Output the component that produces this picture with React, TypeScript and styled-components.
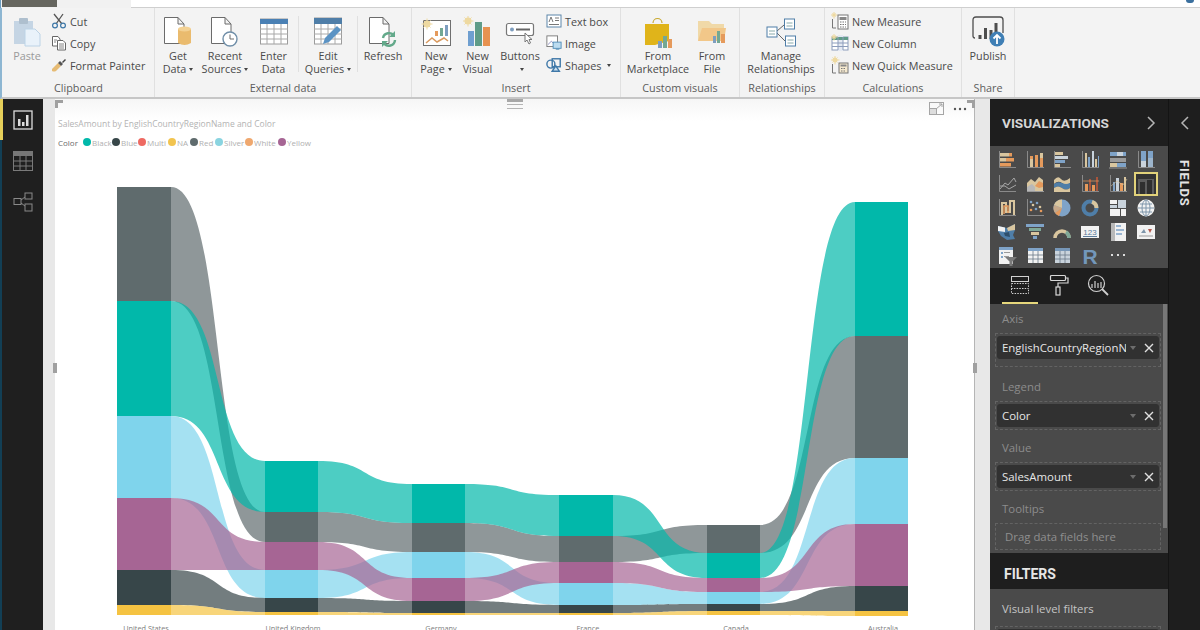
import React from "react";
import styled, { createGlobalStyle } from "styled-components";

const UI = `"Open Sans", "Liberation Sans", sans-serif`;

const Global = createGlobalStyle`
  html, body { margin: 0; padding: 0; width: 1200px; height: 630px; overflow: hidden; background: #f3f3f3; }
  * { box-sizing: border-box; }
  #root { width: 1200px; height: 630px; }
`;

const Frame = styled.div`
  width: 1200px; height: 630px; display: flex; flex-direction: column; overflow: hidden;
  font-family: ${UI};
`;
const TitleStrip = styled.div`
  height: 8px; display: flex; background: #f1f1f1; border-left: 1px solid #6a9cc0;
`;
const GreyTab = styled.div`
  width: 55px; height: 7px; margin-left: 1px; background: #66665f;
`;
const SearchBox = styled.div`
  flex: 1; margin-left: 74px; height: 8px; background: #fff; border-bottom: 1px solid #cfcfcf;
  display: flex; justify-content: flex-end; padding-right: 6px;
`;
const UserDot = styled.span`
  width: 8px; height: 3px; border-radius: 0 0 4px 4px; background: #3a6f9e;
`;
const Ribbon = styled.div`
  height: 91px; display: flex; padding-left: 1px; background: #f3f3f3;
  border-left: 2px solid #8db6d2; border-bottom: 2px solid #c6c6c6;
`;
const Group = styled.div<{ $w: number; $pl?: number }>`
  width: ${p => p.$w}px; padding-left: ${p => p.$pl || 0}px; display: flex; flex-direction: column;
  border-right: 1px solid #e0e0e0;
`;
const GroupBody = styled.div`
  height: 73px; display: flex;
`;
const GroupLabel = styled.div<{ $shift?: number }>`
  height: 14px; line-height: 14px; text-align: center; font-size: 10.8px; color: #5c5c5c;
  margin-left: ${p => p.$shift || 0}px;
`;
const BigButton = styled.div<{ $w: number; $muted?: boolean }>`
  width: ${p => p.$w}px; padding-top: 6px; display: flex; flex-direction: column; align-items: center;
  font-size: 10.8px; line-height: 13px; color: ${p => (p.$muted ? "#9a9a9a" : "#4a4a4a")};
  text-align: center; white-space: nowrap;
`;
const BigLabel = styled.div`
  margin-top: -1px;
`;
const IconSlot = styled.div`
  height: 36px; display: flex; align-items: center; justify-content: center;
`;
const Caret = styled.span`
  display: inline-block; width: 0; height: 0; margin-left: 3px; vertical-align: 2px;
  border-left: 2.5px solid transparent; border-right: 2.5px solid transparent; border-top: 3px solid #444;
`;
const Sep = styled.div`
  width: 1px; height: 56px; margin-top: 8px; background: #e0e0e0;
`;
const SmallCol = styled.div<{ $ml?: number }>`
  padding-top: 2px; margin-left: ${p => p.$ml || 0}px; display: flex; flex-direction: column;
`;
const SmallRow = styled.div`
  height: 22px; display: flex; align-items: center; gap: 3px; font-size: 10.8px; color: #4a4a4a; white-space: nowrap;
`;
const Main = styled.div`
  flex: 1; min-height: 0; display: flex;
`;
const LeftNav = styled.nav`
  width: 43px; background: #1f1f1f; display: flex; flex-direction: column; border-left: 2px solid #123f55;
`;
const NavItem = styled.div<{ $active?: boolean }>`
  height: 41px; margin-left: -2px; display: flex; align-items: center; justify-content: center;
  border-left: 3px solid ${p => (p.$active ? "#e6cf5a" : "transparent")};
`;
const CanvasArea = styled.div`
  flex: 1; min-width: 0; background: #e8e8e8; padding: 0 15px 0 12px;
`;
const Page = styled.div`
  position: relative; height: 100%; background: linear-gradient(#f6f6f6, #fff 22px);
  border-right: 1px solid #b5b5b5;
`;
const VisualHeader = styled.div`
  padding: 19px 0 2px 3px; display: flex; flex-direction: column; gap: 6px;
`;
const VisualTitle = styled.div`
  height: 12px; line-height: 12px; font-size: 8.5px; color: #b3b3b3; white-space: nowrap;
`;
const Legend = styled.div`
  height: 12px; display: flex; align-items: center; font-size: 8px; color: #b0b0b0; white-space: nowrap;
`;
const LegendName = styled.span`
  width: 25px; color: #6a6a6a;
`;
const LegendItem = styled.span<{ $w: number }>`
  width: ${p => p.$w}px; display: flex; align-items: center; gap: 1px;
`;
const Dot = styled.i<{ $c: string }>`
  width: 8px; height: 8px; border-radius: 50%; background: ${p => p.$c};
`;
const ChartSvg = styled.svg`
  display: block;
`;
const DragLines = styled.div`
  position: absolute; left: 452px; top: 0; width: 16px; height: 10px;
  border-top: 3px solid #a8a8a8; border-bottom: 1px solid #b5b5b5;
  &::after { content: ""; display: block; height: 1px; margin-top: 2px; background: #b5b5b5; }
`;
const Corner = styled.div<{ $right?: boolean }>`
  position: absolute; top: 1px; width: 8px; height: 8px; border-top: 3px solid #a0a0a0;
  ${p => (p.$right ? "right: -1px; border-right: 3px solid #a0a0a0;" : "left: 0; border-left: 3px solid #a0a0a0;")}
`;
const VisualTools = styled.div`
  position: absolute; top: 3px; right: 7px; display: flex; align-items: center; gap: 9px;
`;
const Handle = styled.div<{ $right?: boolean }>`
  position: absolute; top: 264px; width: 4px; height: 10px; background: #a0a0a0;
  ${p => (p.$right ? "right: -3px;" : "left: -2px;")}
`;
const VizPanel = styled.aside`
  width: 178px; background: #1e1e1e; display: flex; flex-direction: column;
`;
const PanelHeader = styled.div`
  height: 47px; padding: 0 12px; display: flex; align-items: center; justify-content: space-between;
`;
const PanelTitle = styled.div`
  font-family: Roboto, sans-serif; font-weight: 700; font-size: 13.6px; color: #d6d6d6;
`;
const Gallery = styled.div`
  height: 122px; padding: 2px 0 0 3px; background: #4a4a4a;
  display: grid; grid-template-columns: repeat(6, 27.8px); grid-auto-rows: 24px;
`;
const GalleryCell = styled.div<{ $selected?: boolean }>`
  display: flex; align-items: center; justify-content: center;
  ${p => p.$selected && "margin: 0 2px; border: 2px solid #e2d27a; background: #333;"}
`;
const TabRow = styled.div`
  height: 36px; display: flex; gap: 3px; padding-left: 12px;
`;
const Tab = styled.div<{ $active?: boolean }>`
  width: 36px; display: flex; align-items: center; justify-content: center;
  border-bottom: 2px solid ${p => (p.$active ? "#e6d77c" : "transparent")};
`;
const Wells = styled.div`
  position: relative; height: 249px; background: #4a4a4a; overflow: hidden;
`;
const Scrollbar = styled.div`
  position: absolute; right: 1px; top: 0; width: 4px; height: 224px; background: #777;
`;
const WellLabel = styled.div<{ $top: number }>`
  margin-top: ${p => p.$top}px; height: 26px; line-height: 26px; padding-left: 12px; font-size: 11.4px; color: #8c8c8c;
`;
const Well = styled.div<{ $pad: number; $empty?: boolean }>`
  margin: 1px 7px 0 5px; padding: ${p => (p.$empty ? "0 0 0 9px" : `2px 1px ${p.$pad}px`)};
  ${p => p.$empty && "height: 27px; line-height: 26px; font-size: 11.4px; color: #8f8f8f;"}
  border: 1px dashed #636363; white-space: nowrap;
`;
const Chip = styled.div`
  height: 23px; padding: 0 5px 0 5px; display: flex; align-items: center; border-radius: 3px;
  background: #313131; color: #e6e6e6; font-size: 11.4px;
`;
const ChipName = styled.span`
  flex: 1; overflow: hidden; white-space: nowrap;
`;
const ChipCaret = styled.span`
  width: 0; height: 0; margin: 0 8px 0 4px;
  border-left: 3.5px solid transparent; border-right: 3.5px solid transparent; border-top: 4px solid #6d6d6d;
`;
const FiltersHeader = styled.div`
  height: 36px; padding: 6px 0 0 14px; display: flex; align-items: center;
  font-family: Roboto, sans-serif; font-weight: 700; font-size: 14px; color: #e6e6e6;
`;
const FilterBody = styled.div`
  flex: 1; background: #4a4a4a; overflow: hidden;
`;
const FilterLabel = styled.div`
  height: 36px; line-height: 39px; padding-left: 12px; font-size: 11.4px; color: #c4c4c4;
`;
const FieldsPanel = styled.aside`
  width: 32px; background: #1e1e1e; border-left: 1px solid #141414; display: flex; flex-direction: column; align-items: center;
`;
const FieldsChevron = styled.div`
  height: 47px; display: flex; align-items: center;
`;
const FieldsTitle = styled.div`
  margin-top: 14px; writing-mode: vertical-rl; font-family: Roboto, sans-serif; font-weight: 700; font-size: 13px;
  letter-spacing: 0.8px; color: #e4e4e4;
`;

/* ---------- ribbon icons ---------- */
const Doc = ({ s = "#6b6b6b" }: { s?: string }) => (
  <path d="M1.5 1.5H15L21 8V27.5H1.5Z M15 1.5V8H21" fill="#fff" stroke={s} strokeWidth="1" />
);
const Paste = () => (
  <svg width="28" height="30" viewBox="0 0 28 30"><rect x="1" y="4" width="19" height="23" fill="#c5d5e4" /><rect x="6" y="1" width="9" height="6" rx="1" fill="#aebfce" /><path d="M12 12H22L27 17V29H12Z" fill="#e9f2fa" stroke="#bcd3e6" /></svg>
);
const Cut = () => (
  <svg width="16" height="16" viewBox="0 0 16 16" fill="none"><path d="M3 1L11 11M12 1L5 11" stroke="#555" strokeWidth="1.3" /><circle cx="4" cy="12.5" r="2.4" stroke="#3f78a8" strokeWidth="1.2" /><circle cx="12" cy="12.5" r="2.4" stroke="#3f78a8" strokeWidth="1.2" /></svg>
);
const Copy = () => (
  <svg width="16" height="16" viewBox="0 0 16 16" fill="#fff" stroke="#666"><path d="M1.5 1.5H7L9 4V11H1.5Z" /><path d="M6.5 5.5H12L14.5 8V15H6.5Z" /><path d="M8 9H13M8 11H13M8 13H13M3 5H6M3 7H5" strokeWidth=".8" /></svg>
);
const Painter = () => (
  <svg width="16" height="16" viewBox="0 0 16 16"><path d="M1 12L7 6L10 9L5 14Q3 15 1 14Z" fill="#e6bb74" /><path d="M7 6L9 4L12 7L10 9Z" fill="#555" /><path d="M11 5L14 2L15 3L12 6Z" fill="#444" /></svg>
);
const GetData = () => (
  <svg width="30" height="32" viewBox="0 0 30 32"><Doc /><path d="M15 13H28V27Q21.500 31 15 27Z" fill="#eabb6e" /><ellipse cx="21.500" cy="13" rx="6.500" ry="2.500" fill="#f3d193" /></svg>
);
const Recent = () => (
  <svg width="30" height="32" viewBox="0 0 30 32"><Doc /><circle cx="20" cy="23" r="7" fill="#fff" stroke="#6f8ea8" strokeWidth="1.4" /><path d="M20 18.500V23H24" fill="none" stroke="#6b6b6b" /></svg>
);
const EnterData = () => (
  <svg width="30" height="28" viewBox="0 0 30 28"><rect x="1.500" y="1" width="27" height="25" fill="#fff" stroke="#9c9c9c" /><rect x="1" y="1" width="28" height="5" fill="#4a80b4" /><path d="M1 11H29M1 16H29M1 21H29M8 6V26M15 6V26M22 6V26" stroke="#a8a8a8" fill="none" /></svg>
);
const EditQueries = () => (
  <svg width="30" height="30" viewBox="0 0 30 30"><rect x="1.500" y="1" width="27" height="26" fill="#fff" stroke="#9c9c9c" /><rect x="1" y="1" width="28" height="6" fill="#4f7ea8" /><path d="M1 12H29M1 17H29M1 22H29M8 7V27M15 7V27M22 7V27" stroke="#aaa" fill="none" /><path d="M10 27L12 21L24 9L28 13L16 25Z" fill="#5b93c4" /></svg>
);
const Refresh = () => (
  <svg width="30" height="32" viewBox="0 0 30 32" fill="none"><Doc /><path d="M15 22A6 6 0 0 1 26 20M27 24A6 6 0 0 1 16 27" stroke="#63a98a" strokeWidth="2.400" /><path d="M27 15V21H21ZM14 31V25H20Z" fill="#63a98a" /></svg>
);
const Sun = ({ x = 6, y = 6, r = 3.5 }: { x?: number; y?: number; r?: number }) => (
  <g><circle cx={x} cy={y} r={r} fill="#eed9a0" /><path d={`M${x - r - 2} ${y}H${x + r + 2}M${x} ${y - r - 2}V${y + r + 2}M${x - r} ${y - r}L${x + r} ${y + r}M${x + r} ${y - r}L${x - r} ${y + r}`} stroke="#eed9a0" /></g>
);
const NewPage = () => (
  <svg width="32" height="30" viewBox="0 0 32 30" fill="none"><rect x="3.500" y="3.500" width="27" height="25" fill="#fff" stroke="#6f6f6f" /><rect x="15" y="14" width="3" height="5" fill="#e59a5c" /><rect x="20" y="11" width="3" height="8" fill="#73a894" /><rect x="25" y="8" width="3" height="11" fill="#7e9ebf" /><path d="M6 26L12 21L17 25L24 21L28 24" stroke="#d99a60" strokeWidth="1.500" /><Sun x={7} y={7} /></svg>
);
const NewVisual = () => (
  <svg width="30" height="32" viewBox="0 0 30 32"><rect x="5" y="15" width="6" height="15" fill="#6f9fd0" /><rect x="12" y="6" width="7" height="24" fill="#5f9c88" /><rect x="20" y="11" width="7" height="19" fill="#e79250" /><Sun x={5} y={5} /></svg>
);
const Buttons = () => (
  <svg width="30" height="30" viewBox="0 0 30 30" fill="none"><rect x="1.500" y="6.500" width="27" height="12" rx="2" fill="#fff" stroke="#777" strokeWidth="1.200" /><circle cx="7" cy="12.500" r="2" fill="#7e9ebf" /><path d="M11 12.500H25" stroke="#666" strokeWidth="2" /><path d="M20 16V25L22 23L24 27L25.500 26L24 22.500H27Z" fill="#fff" stroke="#777" /></svg>
);
const TextBox = () => (
  <svg width="16" height="16" viewBox="0 0 16 16" fill="none"><rect x="1" y="2" width="14" height="12" stroke="#5c86aa" fill="#fff" /><path d="M3 9L5 4L7 9M9 5H13M9 7.500H13M3 11.500H13" stroke="#777" /></svg>
);
const ImageIcon = () => (
  <svg width="16" height="18" viewBox="0 0 18 18" fill="none"><rect x="1" y="1" width="12" height="12" fill="#fff" stroke="#777" /><path d="M2 11L6 7L10 11" stroke="#88b" /><rect x="8" y="8" width="9" height="7" fill="#bcdcf0" stroke="#4f8cb8" /><path d="M11 16H15" stroke="#4f8cb8" /></svg>
);
const Shapes = () => (
  <svg width="16" height="18" viewBox="0 0 18 18" fill="none" stroke="#3f78a8" strokeWidth="1.600"><circle cx="5.500" cy="8" r="4.500" /><rect x="7" y="2" width="9" height="9" /><path d="M7 16L11 10L15 16Z" fill="#cfe2f0" /></svg>
);
const Market = () => (
  <svg width="30" height="33" viewBox="0 0 30 33" fill="none"><path d="M10 7A4.500 4.500 0 0 1 19 7" stroke="#c9a92f" strokeWidth="1.200" /><path d="M2 8H26V25L12 29H2Z" fill="#e0b41a" /><rect x="15" y="25" width="4" height="7" fill="#7e9ebf" /><rect x="20" y="20" width="4" height="12" fill="#73a894" /><rect x="25" y="23" width="4" height="9" fill="#e59a5c" /></svg>
);
const FromFile = () => (
  <svg width="30" height="30" viewBox="0 0 30 30"><path d="M1 4H12L15 7H27V24H1Z" fill="#f0d9a8" /><path d="M1 24L5 11H29L27 24Z" fill="#f2c789" /><rect x="16" y="19" width="3" height="7" fill="#7e9ebf" /><rect x="20" y="14" width="3" height="12" fill="#73a894" /><rect x="24" y="17" width="4" height="9" fill="#e59a5c" /></svg>
);
const Relationships = () => (
  <svg width="30" height="30" viewBox="0 0 30 30" fill="#fff" stroke="#4f7ea8"><path d="M11 14L18 8M11 16L19 24" fill="none" stroke="#666" /><rect x="1" y="10" width="10" height="10" /><rect x="18.500" y="2" width="10" height="10" /><rect x="19.500" y="19" width="10" height="10" /><path d="M3 14H9M3 17H9M20.500 6H26.500M20.500 9H26.500M21.500 23H27.500M21.500 26H27.500" stroke="#8aa" /></svg>
);
const Measure = () => (
  <svg width="18" height="18" viewBox="0 0 18 18"><Sun x={3} y={3} r={1.600} /><path d="M1.500 7V16H5" fill="none" stroke="#777" /><rect x="7" y="3" width="10" height="14" fill="#fff" stroke="#777" /><rect x="8.500" y="5" width="7" height="3" fill="#888" /><path d="M9 10H15M9 12.500H15M9 15H15" stroke="#777" strokeDasharray="1.500 1" /></svg>
);
const Column = () => (
  <svg width="18" height="18" viewBox="0 0 18 18" fill="none"><rect x="1" y="3" width="16" height="13" fill="#fff" stroke="#8d9dbc" /><rect x="7" y="1" width="5" height="16" fill="#e4e9f2" /><rect x="1" y="3" width="16" height="3" fill="#5f9c88" /><path d="M1 9H17M1 12.500H17M7 3V16M12 3V16" stroke="#8d9dbc" /><Sun x={3} y={3} r={1.600} /></svg>
);
const QuickMeasure = () => (
  <svg width="18" height="18" viewBox="0 0 18 18"><Sun x={4} y={4} r={2.500} /><path d="M1.500 8V17H5" fill="none" stroke="#777" /><rect x="8" y="7" width="9" height="10" fill="#f5e9cf" stroke="#777" /><rect x="9.500" y="8.500" width="6" height="2" fill="#888" /><path d="M10 12.500H15M10 15H15" stroke="#777" strokeDasharray="1.500 1" /></svg>
);
const Publish = () => (
  <svg width="34" height="34" viewBox="0 0 34 34" fill="none"><path d="M4 23Q2 23 2 21V5Q2 2 5 2H29Q32 2 32 5V18" stroke="#4e4e4e" strokeWidth="1.300" /><path d="M9 24V20M14.500 24V13M20 24V15M25 20V8" stroke="#4e4e4e" strokeWidth="3" /><circle cx="26" cy="24" r="7.500" fill="#3f7fb5" /><path d="M26 29V20M22.500 23.500L26 20L29.500 23.500" stroke="#fff" strokeWidth="1.800" /></svg>
);

/* ---------- nav ---------- */
const NavReport = () => (
  <svg width="20" height="20" viewBox="0 0 20 20" fill="none"><rect x="1" y="1" width="18" height="18" stroke="#ddd" strokeWidth="1.300" /><path d="M5 16V9H7.500V16ZM9 16V12H11.500V16ZM13 16V5H15.500V16Z" fill="#ddd" /></svg>
);
const NavData = () => (
  <svg width="20" height="20" viewBox="0 0 20 20" fill="none"><rect x=".5" y=".5" width="19" height="19" stroke="#7a7a7a" /><rect x="0" y="0" width="20" height="5" fill="#777" /><path d="M0 10H20M0 15H20M7 5V20M13 5V20" stroke="#7a7a7a" /></svg>
);
const NavModel = () => (
  <svg width="20" height="20" viewBox="0 0 20 20" fill="none" stroke="#8a8a8a"><rect x="1" y="6.500" width="7" height="6" /><rect x="12" y="1" width="7" height="6" /><rect x="12" y="12" width="7" height="7" /><path d="M8 8L12 5M8 11L12 14" /></svg>
);

/* ---------- gallery ---------- */
const o = "#e59a5c", b = "#7fa3c8", t = "#d9c69f", w = "#f2f2f2", g = "#7fa898", a = "#9a9a9a", l = "#c9d3dc";
const rs = (...items: [number, number, number, number, string][]) =>
  items.map(([x, y, wd, h, c], i) => <rect key={i} x={x} y={y} width={wd} height={h} fill={c} />);
const Axes = () => <path d="M2.500 1V17.500H19" fill="none" stroke={a} strokeWidth=".8" />;
const Grid3 = ({ hc = b, bg = w }: { hc?: string; bg?: string }) => (
  <g><rect x="3" y="2" width="15" height="15" fill={bg} /><rect x="3" y="2" width="15" height="3" fill={hc} /><path d="M3 9H18M3 13H18M8 5V17M13 5V17" stroke="#6b7a88" strokeWidth=".8" /></g>
);
const galleryIcons: React.ReactNode[] = [
  <><Axes />{rs([3, 3, 9, 3.500, t], [12, 3, 3, 3.500, o], [3, 8, 6, 3.500, t], [9, 8, 8, 3.500, o], [3, 13, 11, 3.500, o])}</>,
  <><Axes />{rs([5, 9, 3, 8, t], [5, 6, 3, 3, o], [10, 5, 3, 12, o], [15, 3, 3, 14, t], [15, 8, 3, 9, o])}</>,
  <><Axes />{rs([3, 2, 8, 3, t], [3, 6, 13, 3, l], [3, 10, 10, 3, b], [3, 14, 5, 3, t])}</>,
  <><Axes />{rs([5, 3, 2, 14, t], [8, 7, 2, 10, b], [12, 1, 2, 16, l], [15, 9, 2, 8, t], [18, 6, 1, 11, b])}</>,
  <>{rs([2, 2, 16, 4, b], [9, 2, 6, 4, l], [2, 8, 16, 4, a], [2, 13, 16, 4, b], [2, 13, 7, 4, t])}<path d="M1 18H19" stroke={a} /></>,
  <><Axes />{rs([5, 1, 5, 10, b], [5, 11, 5, 6, l], [12, 1, 5, 7, b], [12, 8, 5, 9, "#9db5cc"])}</>,
  <><Axes /><path d="M3 15L8 9L11 11L17 4L19 8M3 12L8 12L12 15L19 11" fill="none" stroke="#b0b0b0" strokeWidth=".9" /></>,
  <><path d="M2 9L6 5L10 8L14 3L18 6V17H2Z" fill={t} /><path d="M10 12L14 7L18 9V13L14 14Z" fill={o} /><path d="M2 13L7 10L10 13V17H2Z" fill="#b8b8b8" /><path d="M2 17.500H19" stroke={a} /></>,
  <><path d="M2 6Q6 1 9 5T18 4V9Q14 12 10 9T2 10Z" fill={t} /><path d="M2 10Q6 7 10 9T18 9V14Q14 17 10 14T2 14Z" fill="#4f7ea8" /><path d="M2 14Q6 11 10 14T18 14V18H2Z" fill={t} /></>,
  <><Axes />{rs([5, 10, 3, 7, o], [9, 5, 2, 12, "#a8553c"], [12, 11, 3, 6, o], [16, 3, 2, 14, "#a8553c"])}<path d="M3 7H19" stroke={o} strokeWidth=".7" /></>,
  <><Axes />{rs([5, 8, 2, 9, b], [8, 4, 3, 13, l], [12, 9, 3, 8, o], [16, 3, 2, 14, t])}<path d="M3 12L9 7L15 11L19 5" stroke={t} strokeWidth=".6" fill="none" /></>,
  null,
  <><Axes /><path d="M5 17V5H9V14H13V3H17V17" fill="none" stroke={t} strokeWidth="2" /><path d="M7 16V8H11V15" fill="none" stroke={o} strokeWidth="1.500" /></>,
  <><Axes />{[[6, 12, o], [8, 7, t], [12, 5, b], [11, 11, b], [15, 9, t], [16, 13, o], [6, 4, b]].map(([x, y, c], i) => <circle key={i} cx={x as number} cy={y as number} r="1.300" fill={c as string} />)}</>,
  <><circle cx="10" cy="10" r="8.500" fill={b} /><path d="M10 10L10 1.500A8.500 8.500 0 0 0 2 7Z" fill={t} /><path d="M10 10L2 7A8.500 8.500 0 0 0 3 15Z" fill="#c7a98a" /><path d="M10 10L3 15A8.500 8.500 0 0 0 7 18Z" fill={o} /></>,
  <><circle cx="10" cy="10" r="6.500" fill="none" stroke="#4f7ea8" strokeWidth="4" /><path d="M12 3.800A6.500 6.500 0 0 1 16.500 10" fill="none" stroke={t} strokeWidth="4" /></>,
  <>{rs([2, 2, 7, 4, w], [2, 7, 7, 3, l], [10, 2, 8, 8, l], [2, 11, 10, 7, w], [13, 11, 5, 7, w])}</>,
  <><circle cx="10" cy="10" r="8.500" fill={w} /><path d="M2 10H18M10 2V18M4 6H16M4 14H16" stroke="#7f96ab" /><ellipse cx="10" cy="10" rx="4" ry="8" fill="none" stroke="#7f96ab" /></>,
  <><path d="M1 4L10 6L18 2V8L16 13L18 17L10 18L4 14L1 9Z" fill="#4f7ea8" /><path d="M1 4L8 5.500V10L1 9Z" fill={w} /><path d="M10 6L18 2V8L11 9Z" fill={t} /><path d="M7 11L12 10L13 15L8 14Z" fill="#2f4f6b" /></>,
  <>{rs([1, 2, 18, 3, b], [4, 6, 12, 3, "#7fa898"], [6, 10, 8, 3, t], [8, 14, 4, 3, b])}</>,
  <><path d="M3 16A7 7 0 0 1 17 16" fill="none" stroke={t} strokeWidth="3.500" /><path d="M14 10A7 7 0 0 1 17 16" fill="none" stroke={g} strokeWidth="3.500" /></>,
  <><rect x="1" y="4" width="18" height="12" fill={w} /><text x="10" y="12.500" textAnchor="middle" fontFamily="Liberation Sans" fontSize="8" fill="#5c7d9c">123</text><path d="M3 14.500H17" stroke="#5c7d9c" /></>,
  <><rect x="3" y="1" width="15" height="18" fill={w} /><rect x="3" y="1" width="4" height="18" fill="#b9b9b9" /><path d="M8 4H13M8 8H16M8 12H14" stroke={b} strokeWidth="1.500" /></>,
  <><rect x="1" y="3" width="18" height="14" fill={w} /><path d="M5 11L8 7L10 11Z" fill="#7f96ab" /><path d="M12 7H16L14 11Z" fill="#b35a4c" /><path d="M3 14H17" stroke={a} /></>,
  <><rect x="2" y="1" width="14" height="17" fill={w} /><rect x="2" y="1" width="14" height="3" fill={b} />{rs([4, 6, 2, 2, b], [4, 10, 2, 2, b], [7, 6, 6, 1, a], [7, 10, 5, 1, a])}<path d="M8 11H20L15.500 15.500V20H12.500V15.500Z" fill="#7a7a7a" /></>,
  <Grid3 />,
  <Grid3 bg={l} hc="#7797b8" />,
  <text x="10" y="17.500" textAnchor="middle" fontFamily="Liberation Sans" fontWeight="700" fontSize="21" fill="#7397bb">R</text>,
  <path d="M3 9H5M9 9H11M15 9H17" stroke="#ddd" strokeWidth="2" />,
];

/* ---------- chart ---------- */
const COLS = [[117, 171], [265, 318], [412, 465], [559, 613], [707, 760], [855, 908]];
const SERIES = [
  { c: "#5f6b6d", top: [187, 512, 523, 536, 525, 336], bot: [301, 542, 552, 562, 553, 458] },
  { c: "#01b8aa", top: [301, 461, 484, 495, 553, 202], bot: [416, 512, 523, 536, 578, 336] },
  { c: "#7fd4ec", top: [416, 570, 552, 583, 592, 458], bot: [498, 598, 578, 605, 604, 524] },
  { c: "#a66594", top: [498, 542, 578, 562, 578, 524], bot: [570, 570, 601, 583, 592, 586] },
  { c: "#374649", top: [570, 598, 601, 605, 604, 586], bot: [605, 612, 613, 613, 611, 611] },
  { c: "#f5c342", top: [605, 612, 613, 613, 611, 611], bot: [615, 615, 615, 615, 615, 616] },
];
const ribbonPath = (i: number, top: number[], bot: number[]) => {
  const x1 = COLS[i][1], x2 = COLS[i + 1][0], w2 = x2 - x1;
  const c1 = x1 + w2 * 0.58, c2 = x1 + w2 * 0.42;
  return `M${x1} ${top[i]}C${c1} ${top[i]} ${c2} ${top[i + 1]} ${x2} ${top[i + 1]}V${bot[i + 1]}C${c2} ${bot[i + 1]} ${c1} ${bot[i]} ${x1} ${bot[i]}Z`;
};
const AXIS = [["United States", 146], ["United Kingdom", 293], ["Germany", 441], ["France", 588], ["Canada", 736], ["Australia", 883]] as const;

const LEGEND: [string, string, number][] = [
  ["Black", "#01b8aa", 29], ["Blue", "#374649", 26], ["Multi", "#ee6a62", 30], ["NA", "#f2c44f", 22],
  ["Red", "#5f6b6d", 25], ["Silver", "#8ad4e0", 30], ["White", "#efa86f", 33], ["Yellow", "#a66594", 34],
];

const X = () => (
  <svg width="10" height="10" viewBox="0 0 10 10"><path d="M1 1L9 9M9 1L1 9" stroke="#e0e0e0" strokeWidth="1.400" /></svg>
);
const Field = ({ name }: { name: string }) => (
  <Chip><ChipName>{name}</ChipName><ChipCaret /><X /></Chip>
);
const Chev = ({ left }: { left?: boolean }) => (
  <svg width="9" height="14" viewBox="0 0 9 14" fill="none"><path d={left ? "M8 1L2 7L8 13" : "M1 1L7 7L1 13"} stroke="#b5b5b5" strokeWidth="1.500" /></svg>
);

export default function App() {
  return (
    <Frame>
      <Global />
      <TitleStrip>
        <GreyTab />
        <SearchBox><UserDot /></SearchBox>
      </TitleStrip>
      <Ribbon>
        <Group $w={152}>
          <GroupBody>
            <BigButton $w={48} $muted><IconSlot><Paste /></IconSlot><BigLabel>Paste</BigLabel></BigButton>
            <SmallCol>
              <SmallRow><Cut />Cut</SmallRow>
              <SmallRow><Copy />Copy</SmallRow>
              <SmallRow><Painter />Format Painter</SmallRow>
            </SmallCol>
          </GroupBody>
          <GroupLabel>Clipboard</GroupLabel>
        </Group>
        <Group $w={257}>
          <GroupBody>
            <BigButton $w={46}><IconSlot><GetData /></IconSlot><BigLabel>Get<br />Data<Caret /></BigLabel></BigButton>
            <BigButton $w={48}><IconSlot><Recent /></IconSlot><BigLabel>Recent<br />Sources<Caret /></BigLabel></BigButton>
            <BigButton $w={49}><IconSlot><EnterData /></IconSlot><BigLabel>Enter<br />Data</BigLabel></BigButton>
            <Sep />
            <BigButton $w={58}><IconSlot><EditQueries /></IconSlot><BigLabel>Edit<br />Queries<Caret /></BigLabel></BigButton>
            <Sep />
            <BigButton $w={50}><IconSlot><Refresh /></IconSlot><BigLabel>Refresh</BigLabel></BigButton>
          </GroupBody>
          <GroupLabel>External data</GroupLabel>
        </Group>
        <Group $w={209} $pl={3}>
          <GroupBody>
            <BigButton $w={42}><IconSlot><NewPage /></IconSlot><BigLabel>New<br />Page<Caret /></BigLabel></BigButton>
            <BigButton $w={41}><IconSlot><NewVisual /></IconSlot><BigLabel>New<br />Visual</BigLabel></BigButton>
            <BigButton $w={44}><IconSlot><Buttons /></IconSlot><BigLabel>Buttons<br /><Caret /></BigLabel></BigButton>
            <SmallCol $ml={4}>
              <SmallRow><TextBox />Text box</SmallRow>
              <SmallRow><ImageIcon />Image</SmallRow>
              <SmallRow><Shapes />Shapes<Caret /></SmallRow>
            </SmallCol>
          </GroupBody>
          <GroupLabel $shift={-3}>Insert</GroupLabel>
        </Group>
        <Group $w={119} $pl={4}>
          <GroupBody>
            <BigButton $w={66}><IconSlot><Market /></IconSlot><BigLabel>From<br />Marketplace</BigLabel></BigButton>
            <BigButton $w={42}><IconSlot><FromFile /></IconSlot><BigLabel>From<br />File</BigLabel></BigButton>
          </GroupBody>
          <GroupLabel $shift={-4}>Custom visuals</GroupLabel>
        </Group>
        <Group $w={85}>
          <GroupBody>
            <BigButton $w={82}><IconSlot><Relationships /></IconSlot><BigLabel>Manage<br />Relationships</BigLabel></BigButton>
          </GroupBody>
          <GroupLabel>Relationships</GroupLabel>
        </Group>
        <Group $w={137} $pl={6}>
          <GroupBody>
            <SmallCol>
              <SmallRow><Measure />New Measure</SmallRow>
              <SmallRow><Column />New Column</SmallRow>
              <SmallRow><QuickMeasure />New Quick Measure</SmallRow>
            </SmallCol>
          </GroupBody>
          <GroupLabel $shift={-6}>Calculations</GroupLabel>
        </Group>
        <Group $w={53}>
          <GroupBody>
            <BigButton $w={52}><IconSlot><Publish /></IconSlot><BigLabel>Publish</BigLabel></BigButton>
          </GroupBody>
          <GroupLabel>Share</GroupLabel>
        </Group>
      </Ribbon>
      <Main>
        <LeftNav>
          <NavItem $active><NavReport /></NavItem>
          <NavItem><NavData /></NavItem>
          <NavItem><NavModel /></NavItem>
        </LeftNav>
        <CanvasArea>
          <Page>
            <Corner />
            <Corner $right />
            <DragLines />
            <VisualTools>
              <svg width="15" height="13" viewBox="0 0 15 13" fill="none" stroke="#a5a5a5"><rect x=".5" y=".5" width="14" height="12" /><rect x=".5" y="6.500" width="7" height="6" fill="#ddd" /><path d="M7 7L13 2M10 2H13V5" /></svg>
              <svg width="14" height="4" viewBox="0 0 14 4" fill="#555"><circle cx="2" cy="2" r="1.200" /><circle cx="7" cy="2" r="1.200" /><circle cx="12" cy="2" r="1.200" /></svg>
            </VisualTools>
            <Handle />
            <Handle $right />
            <VisualHeader>
              <VisualTitle>SalesAmount by EnglishCountryRegionName and Color</VisualTitle>
              <Legend>
                <LegendName>Color</LegendName>
                {LEGEND.map(([name, c, wd]) => (
                  <LegendItem key={name} $w={wd}><Dot $c={c} />{name}</LegendItem>
                ))}
              </Legend>
            </VisualHeader>
            <ChartSvg width="920" height="481" viewBox="55 150 920 481">
              {SERIES.map(s => COLS.slice(0, 5).map((_, i) => (
                <path key={s.c + i} d={ribbonPath(i, s.top, s.bot)} fill={s.c} fillOpacity={0.7} />
              )))}
              {SERIES.map(s => COLS.map(([x1, x2], i) => (
                <rect key={s.c + i} x={x1} y={s.top[i]} width={x2 - x1} height={s.bot[i] - s.top[i]} fill={s.c} />
              )))}
              {AXIS.map(([name, x]) => (
                <text key={name} x={x} y={631} textAnchor="middle" fontFamily="Open Sans" fontSize="7.300" fill="#7c7c7c">{name}</text>
              ))}
            </ChartSvg>
          </Page>
        </CanvasArea>
        <VizPanel>
          <PanelHeader><PanelTitle>VISUALIZATIONS</PanelTitle><Chev /></PanelHeader>
          <Gallery>
            {galleryIcons.map((icon, i) => i === 11 ? (
              <GalleryCell key={i} $selected>
                <svg width="18" height="19" viewBox="0 0 18 19"><rect x="1" y="4" width="16" height="15" fill="#5d5d5d" /><rect x="3" y="7" width="5" height="12" fill="#2f2f2f" /><rect x="10" y="5" width="5" height="14" fill="#2f2f2f" /></svg>
              </GalleryCell>
            ) : (
              <GalleryCell key={i}><svg width="20" height="20" viewBox="0 0 20 20">{icon}</svg></GalleryCell>
            ))}
          </Gallery>
          <TabRow>
            <Tab $active>
              <svg width="22" height="20" viewBox="0 0 22 20" fill="none" stroke="#d0d0d0"><rect x="2.500" y="1.500" width="17" height="5" /><path d="M2.500 8.500H19.500V13.500H2.500ZM2.500 13.500V18.500H19.500V13.500" strokeDasharray="1.500 1.200" /></svg>
            </Tab>
            <Tab>
              <svg width="20" height="22" viewBox="0 0 20 22" fill="none" stroke="#d8d8d8" strokeWidth="1.200"><rect x="1.500" y="1.500" width="15" height="5" rx="1" /><path d="M16.500 4H19V9H9V13" /><rect x="7" y="13" width="4" height="8" /></svg>
            </Tab>
            <Tab>
              <svg width="22" height="22" viewBox="0 0 22 22" fill="none" stroke="#d0d0d0" strokeWidth="1.200"><circle cx="9.500" cy="9.500" r="8" /><path d="M15 15L21 21" strokeWidth="1.800" /><path d="M5 14V10M8 14V7M11 14V9M14 14V8" /></svg>
            </Tab>
          </TabRow>
          <Wells>
            <Scrollbar />
            <WellLabel $top={2}>Axis</WellLabel>
            <Well $pad={7}><Field name="EnglishCountryRegionName" /></Well>
            <WellLabel $top={7}>Legend</WellLabel>
            <Well $pad={2}><Field name="Color" /></Well>
            <WellLabel $top={5}>Value</WellLabel>
            <Well $pad={2}><Field name="SalesAmount" /></Well>
            <WellLabel $top={5}>Tooltips</WellLabel>
            <Well $pad={0} $empty>Drag data fields here</Well>
          </Wells>
          <FiltersHeader>FILTERS</FiltersHeader>
          <FilterBody>
            <FilterLabel>Visual level filters</FilterLabel>
            <Well $pad={2}><Chip /></Well>
          </FilterBody>
        </VizPanel>
        <FieldsPanel>
          <FieldsChevron><Chev left /></FieldsChevron>
          <FieldsTitle>FIELDS</FieldsTitle>
        </FieldsPanel>
      </Main>
    </Frame>
  );
}
